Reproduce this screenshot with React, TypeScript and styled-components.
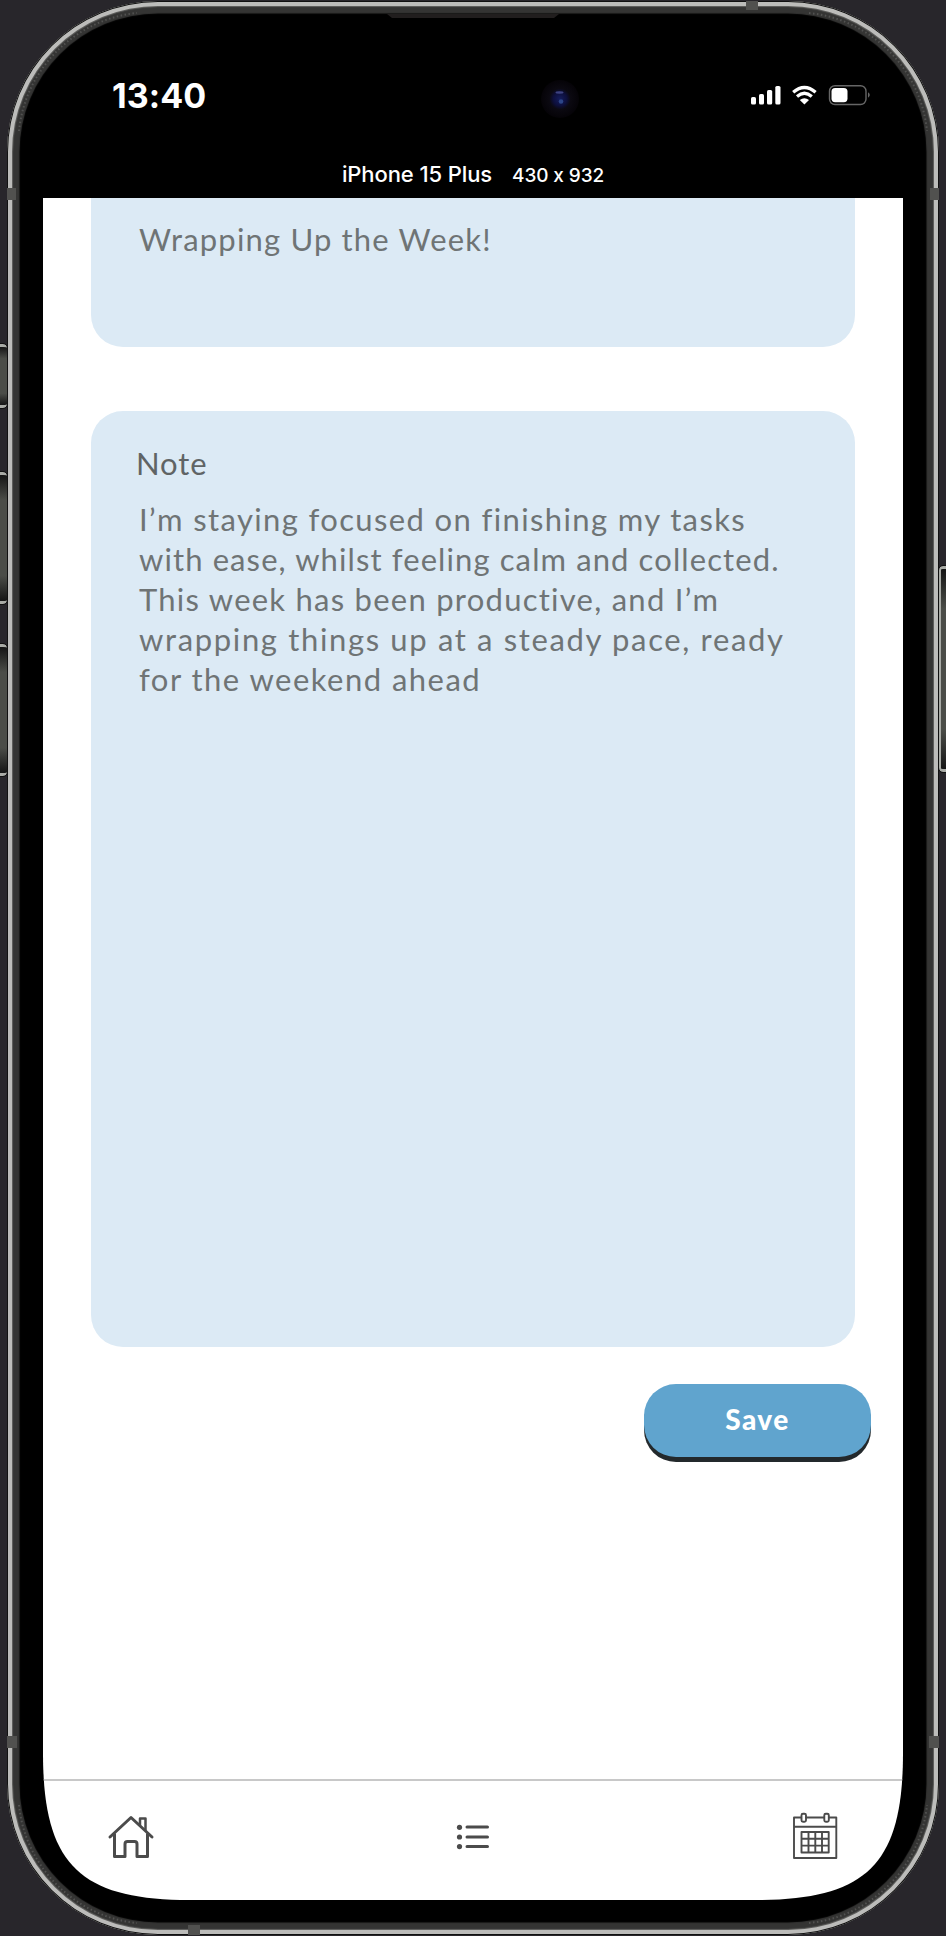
import React from "react";
import styled, { createGlobalStyle } from "styled-components";

const GlobalStyle = createGlobalStyle`
  *, *::before, *::after { box-sizing: border-box; }
  html, body { margin: 0; padding: 0; background: #28262b; }
`;

const rounded = `Lato, "Open Sans", sans-serif`;

const Stage = styled.div`
  position: relative;
  width: 946px;
  height: 1936px;
  padding: 1px 7px;
  overflow: hidden;
  background: #28262b;
`;

const SideButton = styled.div<{ $side: "left" | "right"; $top: number; $height: number }>`
  position: absolute;
  top: ${(p) => p.$top}px;
  ${(p) => (p.$side === "left" ? "left: -4px; width: 11px;" : "right: -5px; width: 12px;")}
  height: ${(p) => p.$height}px;
  border: 3px solid #a9aba6;
  border-radius: 4px;
  border-${(p) => (p.$side === "left" ? "right" : "left")}-width: ${(p) => (p.$side === "left" ? 0 : 2)}px;
  border-${(p) => p.$side}-color: #777a74;
  background: linear-gradient(#151515, #4b4d48 20%, #4b4d48 80%, #151515);
  outline: 1px solid #111;
`;

const Device = styled.div`
  position: relative;
  width: 932px;
  height: 1934px;
  padding: 0 36px 35px;
  border-radius: 151px;
  background: #000;
  box-shadow: inset 0 0 0 1px #111, inset 0 0 0 5px #bcbcba, inset 0 0 1px 6px #626260,
    inset 0 0 1px 12.5px #343433;
  display: flex;
  flex-direction: column;
`;

const BezelArt = styled.svg`
  position: absolute;
  inset: 0;
  pointer-events: none;
`;

const StatusBar = styled.header`
  height: 158px;
  flex: none;
  display: flex;
  justify-content: space-between;
  padding: 74px 32px 0 69px;
`;

const Clock = styled.time`
  color: #fff;
  font: 700 34px/41px Inter, sans-serif;
  letter-spacing: 0.1px;
`;

const StatusIcons = styled.svg`
  display: block;
  margin-top: 8px;
`;

const DeviceLabel = styled.div`
  height: 39px;
  margin-top: -1px;
  margin-bottom: 1px;
  flex: none;
  display: flex;
  justify-content: center;
  align-items: baseline;
  gap: 20px;
  color: #fff;
  white-space: nowrap;
  font-feature-settings: "calt" 0;
`;

const DeviceName = styled.span`
  font-family: Inter, sans-serif;
  font-weight: 500;
  font-size: 22px;
  line-height: 32px;
  letter-spacing: -0.1px;
`;

const DeviceSize = styled.span`
  font-family: Inter, sans-serif;
  font-weight: 500;
  font-size: 19px;
  line-height: 32px;
  letter-spacing: -0.1px;
`;

const Screen = styled.main`
  width: 860px;
  height: 1702px;
  flex: none;
  display: flex;
  flex-direction: column;
  background: #fff;
  clip-path: path("M0 0H860V1555C860 1666 824 1702 713 1702H147C36 1702 0 1666 0 1555Z");
`;

const Content = styled.div`
  flex: 1;
  display: flex;
  flex-direction: column;
  align-items: center;
`;

const Card = styled.section<{ $height: number; $clipped?: boolean }>`
  width: 764px;
  height: ${(p) => p.$height}px;
  flex: none;
  padding: ${(p) => (p.$clipped ? "21px 48px" : "32px 45px")};
  border-radius: ${(p) => (p.$clipped ? "0 0 32px 32px" : "32px")};
  background: #dceaf5;
  & + & { margin-top: 64px; }
`;

const CardLabel = styled.h2`
  margin: 0 0 16px;
  color: #606465;
  font: 400 31px/40px ${rounded};
  letter-spacing: 0.9px;
`;

const CardText = styled.div<{ $indent?: number }>`
  padding-left: ${(p) => p.$indent ?? 0}px;
  color: #6f7475;
  font: 400 31px/40px ${rounded};
`;

const Line = styled.span<{ $spacing: number }>`
  display: block;
  white-space: nowrap;
  letter-spacing: ${(p) => p.$spacing}px;
`;

const SaveButton = styled.button`
  align-self: flex-end;
  width: 227px;
  height: 73px;
  margin: 37px 32px 0 0;
  padding: 0 0 2px;
  border: 0;
  border-radius: 32px;
  background: #60a4ce;
  box-shadow: 0 5px 0 #23292c;
  color: #fff;
  font: 900 28px/71px ${rounded};
  letter-spacing: 1.5px;
`;

const NavBar = styled.nav`
  height: 121px;
  flex: none;
  display: flex;
  align-items: flex-start;
  justify-content: space-between;
  padding: 30px 64px 0;
  border-top: 2px solid #c8c8c8;
`;

const NavIcon = styled.svg`
  width: 48px;
  height: 52px;
  fill: none;
  stroke: #4b4b4b;
  stroke-linecap: round;
  stroke-linejoin: round;
`;

const noteLines = [
  { text: "I’m staying focused on finishing my tasks", spacing: 1.37 },
  { text: "with ease, whilst feeling calm and collected.", spacing: 1.1 },
  { text: "This week has been productive, and I’m", spacing: 1.25 },
  { text: "wrapping things up at a steady pace, ready", spacing: 1.65 },
  { text: "for the weekend ahead", spacing: 1.48 },
];

function Bezel() {
  return (
    <BezelArt width="932" height="1934" viewBox="0 0 932 1934" fill="none">
      <defs>
        <radialGradient id="lens">
          <stop offset="0" stopColor="#141c5c" />
          <stop offset="0.35" stopColor="#0d0f3c" />
          <stop offset="0.55" stopColor="#0b0911" />
          <stop offset="1" stopColor="#050307" />
        </radialGradient>
      </defs>
      <g stroke="#5a5a59" strokeWidth="2" strokeDasharray="1.5 2.5" opacity="0.8">
        <path d="M12 130C18 68 68 18 130 12" />
        <path d="M802 12C864 18 914 68 920 130" />
        <path d="M12 1804C18 1866 68 1916 130 1922" />
        <path d="M802 1922C864 1916 914 1866 920 1804" />
      </g>
      <g fill="#51514f">
        <rect x="0" y="187" width="9" height="12" />
        <rect x="923" y="187" width="9" height="12" />
        <rect x="0" y="1735" width="10" height="12" />
        <rect x="922" y="1735" width="10" height="12" />
        <rect x="739" y="0" width="12" height="9" />
        <rect x="181" y="1924" width="12" height="10" />
      </g>
      <path d="M380 13H552L547 17H385Z" fill="#211e1e" />
      <circle cx="553" cy="98" r="19" fill="url(#lens)" />
      <ellipse cx="552.5" cy="91.5" rx="4" ry="1.2" fill="#3d4280" />
      <circle cx="554" cy="100.5" r="2.3" fill="#2c4588" />
    </BezelArt>
  );
}

export default function App() {
  return (
    <>
      <GlobalStyle />
      <Stage>
        <SideButton $side="left" $top={344} $height={64} />
        <SideButton $side="left" $top={472} $height={132} />
        <SideButton $side="left" $top={644} $height={132} />
        <SideButton $side="right" $top={566} $height={206} />
        <Device>
          <Bezel />
          <StatusBar>
            <Clock>13:40</Clock>
            <StatusIcons width="122" height="26" viewBox="749 83 122 26" fill="none">
              <g fill="#fff">
                <rect x="751" y="97" width="5" height="7.5" rx="1.6" />
                <rect x="759" y="94" width="5" height="10.5" rx="1.6" />
                <rect x="767" y="90" width="5.2" height="14.5" rx="1.6" />
                <rect x="775.3" y="86" width="5.2" height="18.5" rx="1.6" />
                <path d="M799.8 100Q804.4 96.6 809 100L804.4 104.6Z" />
              </g>
              <path d="M793.2 92.2Q804.4 82.8 815.6 92.2M797 96.4Q804.4 90.2 811.8 96.4" stroke="#fff" strokeWidth="3.3" />
              <rect x="829.5" y="85.7" width="36.5" height="18.8" rx="5.5" stroke="#666" strokeWidth="1.4" />
              <rect x="831.5" y="88" width="16" height="14.2" rx="3.6" fill="#fff" />
              <path d="M868 92.3Q871.6 95 868 97.7Z" fill="#666" />
            </StatusIcons>
          </StatusBar>
          <DeviceLabel>
            <DeviceName>iPhone 15 Plus</DeviceName>
            <DeviceSize>430 x 932</DeviceSize>
          </DeviceLabel>
          <Screen>
            <Content>
              <Card $height={149} $clipped>
                <CardText>
                  <Line $spacing={1.18}>Wrapping Up the Week!</Line>
                </CardText>
              </Card>
              <Card $height={936}>
                <CardLabel>Note</CardLabel>
                <CardText $indent={3}>
                  {noteLines.map((line) => (
                    <Line key={line.text} $spacing={line.spacing}>{line.text}</Line>
                  ))}
                </CardText>
              </Card>
              <SaveButton>Save</SaveButton>
            </Content>
            <NavBar>
              <NavIcon viewBox="107 1811 48 52" strokeWidth="3">
                <path d="M110 1837L131 1817.5L152 1837M114.5 1834V1856.5H125V1844Q125 1841.5 127.5 1841.5H134.5Q137 1841.5 137 1844V1856.5H147.5V1834" />
                <path d="M140 1825V1818.5H145.5V1830" strokeWidth="2.5" />
              </NavIcon>
              <NavIcon viewBox="449 1811 48 52" strokeWidth="3">
                <path d="M467 1827H487.5M467 1837H487.5M467 1846.6H487.5" />
                <g fill="#4b4b4b" stroke="none">
                  <circle cx="459.5" cy="1827.3" r="2.6" />
                  <circle cx="459.5" cy="1837" r="2.6" />
                  <circle cx="459.5" cy="1846.6" r="2.6" />
                </g>
              </NavIcon>
              <NavIcon viewBox="791 1811 48 52" strokeWidth="1.9">
                <path d="M801 1817.5H794V1858H836.3V1817.5H829M806 1817.5H824M794 1826.7H836.3" />
                <rect x="801.5" y="1813.8" width="4.5" height="8" rx="1.5" />
                <rect x="824.3" y="1813.8" width="4.5" height="8" rx="1.5" />
                <path d="M801.5 1832H828.7V1852.5H801.5ZM801.5 1838.8H828.7M801.5 1845.6H828.7M808.5 1832V1852.5M815.3 1832V1852.5M822 1832V1852.5" />
              </NavIcon>
            </NavBar>
          </Screen>
        </Device>
      </Stage>
    </>
  );
}
